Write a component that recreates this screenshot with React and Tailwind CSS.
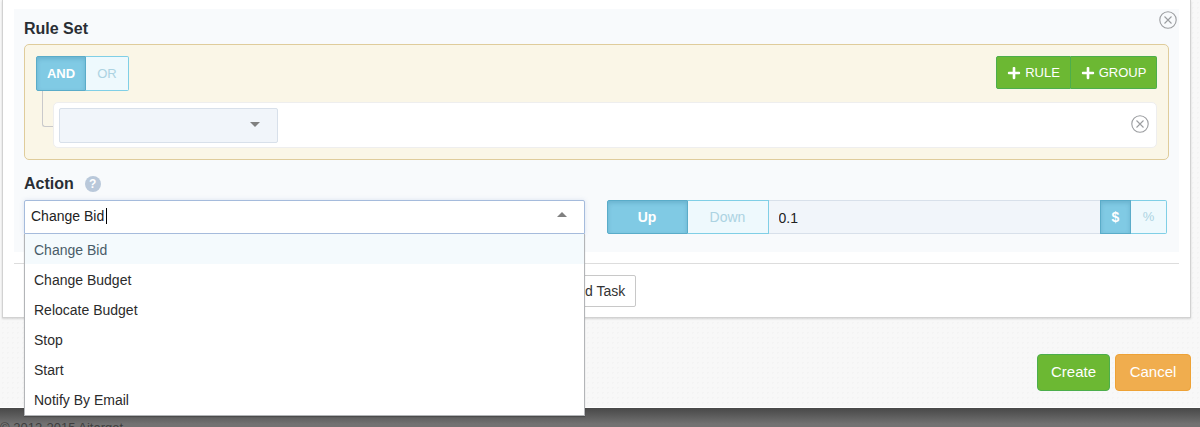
import React from "react";
import { FaPlus } from "react-icons/fa";

const OPTIONS = [
  "Change Bid",
  "Change Budget",
  "Relocate Budget",
  "Stop",
  "Start",
  "Notify By Email",
];

const ACTIVE =
  "border border-[#5aacc9] bg-[#80cae4] text-white font-bold shadow-[inset_0_2px_4px_rgba(0,70,110,0.18)]";
const IDLE = "border border-[#80cfe6] bg-[#eef9fd] text-[#acd3e2]";

function CloseButton({ label }) {
  return (
    <button type="button" aria-label={label} className="block size-[18px]">
      <svg viewBox="0 0 18 18" className="size-[18px]" fill="none" stroke="#9b9da0">
        <circle cx="9" cy="9" r="8.2" strokeWidth="1.1" />
        <path d="M5.5 5.5l7 7M12.5 5.5l-7 7" strokeWidth="1.1" />
      </svg>
    </button>
  );
}

function RuleSet() {
  return (
    <section>
      <h2 className="mb-[3px] text-base leading-6 font-bold">Rule Set</h2>
      <div className="rounded-[5px] border border-[#dfcc9b] bg-[#faf6e7] p-[11px]">
        <div className="flex items-start justify-between">
          <div className="flex h-[35px] text-[13px]" role="group" aria-label="Match">
            <button type="button" aria-pressed="true" className={`w-[50px] rounded-l-[2px] ${ACTIVE}`}>
              AND
            </button>
            <button type="button" aria-pressed="false" className={`w-[43px] rounded-r-[2px] border-l-0 ${IDLE}`}>
              OR
            </button>
          </div>
          <div className="flex h-[33px] text-[13px] text-white">
            <button
              type="button"
              className="flex w-[75px] items-center justify-center gap-1 rounded-l-[2px] border border-[#4cae4c] bg-[#6cb833] pt-px"
            >
              <FaPlus size={14} aria-hidden="true" />
              RULE
            </button>
            <button
              type="button"
              className="flex w-[86px] items-center justify-center gap-1 rounded-r-[2px] border border-l-0 border-[#4cae4c] bg-[#6cb833] pt-px"
            >
              <FaPlus size={14} aria-hidden="true" />
              GROUP
            </button>
          </div>
        </div>
        <div className="relative pt-[11px] pl-[17px]">
          <span className="absolute top-0 left-[6px] h-[36px] w-[11px] rounded-bl-[3px] border-b border-l border-[#c9c9cb]" />
          <div className="flex items-start justify-between rounded-[5px] border border-[#eeeeee] bg-white pt-[5px] pr-[7px] pb-[4px] pl-[5px]">
            <div className="relative w-[219px]">
              <select
                aria-label="Rule field"
                className="block h-[35px] w-full appearance-none rounded-[2px] border border-[#d8e0ea] bg-[#f1f5fa] px-2 text-sm"
              >
                <option value=""></option>
              </select>
              <span className="pointer-events-none absolute top-[14px] right-[18px] border-x-[5px] border-t-[5px] border-x-transparent border-t-[#808080]" />
            </div>
            <div className="pt-[7px]">
              <CloseButton label="Remove rule" />
            </div>
          </div>
        </div>
      </div>
    </section>
  );
}

function ActionCombobox() {
  return (
    <div className="relative flex-1">
      <input
        id="action"
        type="text"
        role="combobox"
        aria-expanded="true"
        aria-controls="action-options"
        defaultValue="Change Bid"
        className="block h-[34px] w-full rounded-t-[2px] border border-[#a5bbdc] bg-white px-[6px] pb-[3px] text-sm text-[#222] shadow-[0_0_4px_rgba(150,170,210,0.3)] outline-none"
      />
      <span className="absolute top-[8px] left-[82px] h-[16px] w-px bg-black" />
      <span className="pointer-events-none absolute top-[12px] right-[18px] border-x-[5px] border-b-[5px] border-x-transparent border-b-[#808080]" />
      <ul
        id="action-options"
        role="listbox"
        className="absolute inset-x-0 top-full z-10 border border-t-0 border-[#b3b5b8] bg-white pb-px text-sm text-[#2b2b2b] shadow-[0_1px_1px_rgba(0,0,0,0.2)]"
      >
        {OPTIONS.map((option, i) => (
          <li
            key={option}
            role="option"
            aria-selected={i === 0}
            className={`h-[30px] px-[9px] leading-8 ${i === 0 ? "bg-[#f4fafd] text-[#495c68]" : ""}`}
          >
            {option}
          </li>
        ))}
      </ul>
    </div>
  );
}

function ChangeAmount() {
  return (
    <div className="flex h-[34px] flex-1 text-sm">
      <button type="button" aria-pressed="true" className={`w-[81px] shrink-0 rounded-l-[2px] ${ACTIVE}`}>
        Up
      </button>
      <button type="button" aria-pressed="false" className={`w-[81px] shrink-0 border-l-0 ${IDLE}`}>
        Down
      </button>
      <input
        type="text"
        aria-label="Amount"
        defaultValue="0.1"
        className="min-w-0 flex-1 border-y border-[#d8e0ea] bg-[#f1f5fa] px-[10px] pt-[2px] text-[#222]"
      />
      <button type="button" aria-pressed="true" className={`w-[31px] shrink-0 ${ACTIVE}`}>
        $
      </button>
      <button type="button" aria-pressed="false" className={`w-[36px] shrink-0 rounded-r-[2px] border-l-0 text-[13px] ${IDLE}`}>
        %
      </button>
    </div>
  );
}

export default function App() {
  return (
    <div className="flex h-screen flex-col overflow-hidden bg-[#686868] font-['Liberation_Sans',Arial,sans-serif] text-[#2a2e34]">
      <main className="border-b border-white bg-[#f8f8f8] bg-[radial-gradient(#f4f4f4_1px,transparent_1px)] bg-[size:5px_5px] pr-[9px] pb-4 pl-[2px]">
        <div className="border border-t-0 border-[#d2d2d2] bg-white px-[11px] pt-[9px] pb-[10px] shadow-[0_1px_2px_rgba(0,0,0,0.15)]">
          <div className="relative bg-[#f8fafc] px-[10px] pt-2 pb-[18px]">
            <div className="absolute top-[2px] right-[2px]">
              <CloseButton label="Remove task" />
            </div>
            <RuleSet />
            <div className="mt-3 mb-1 flex h-6 items-center gap-[11px]">
              <label htmlFor="action" className="text-base leading-6 font-bold">
                Action
              </label>
              <span
                role="img"
                aria-label="Help"
                className="flex size-4 items-center justify-center rounded-full bg-[#b9c8da] text-xs font-bold text-white"
              >
                ?
              </span>
            </div>
            <div className="flex gap-[22px] pr-[2px]">
              <ActionCombobox />
              <ChangeAmount />
            </div>
          </div>
          <hr className="mt-[11px] border-[#dddddd]" />
          <div className="mt-[11px] flex justify-center">
            <button type="button" className="h-8 rounded-[2px] border border-[#c8c8c8] bg-white px-[10px] text-sm text-[#333]">
              Add Task
            </button>
          </div>
        </div>
        <div className="mt-9 flex justify-end gap-[5px] text-[15px] text-white">
          <button type="button" className="h-[37px] w-[73px] rounded-[4px] border border-[#4cae4c] bg-[#6cb833]">
            Create
          </button>
          <button type="button" className="h-[37px] w-[76px] rounded-[4px] border border-[#eea236] bg-[#f0ad4e]">
            Cancel
          </button>
        </div>
      </main>
      <footer className="h-10 shrink-0 bg-linear-to-b from-[#484848] to-[#727272] to-40% pt-[10px] text-[13px] leading-5 whitespace-nowrap text-[#3e3e3e]">
        © 2012-2015 Aitarget
      </footer>
    </div>
  );
}
